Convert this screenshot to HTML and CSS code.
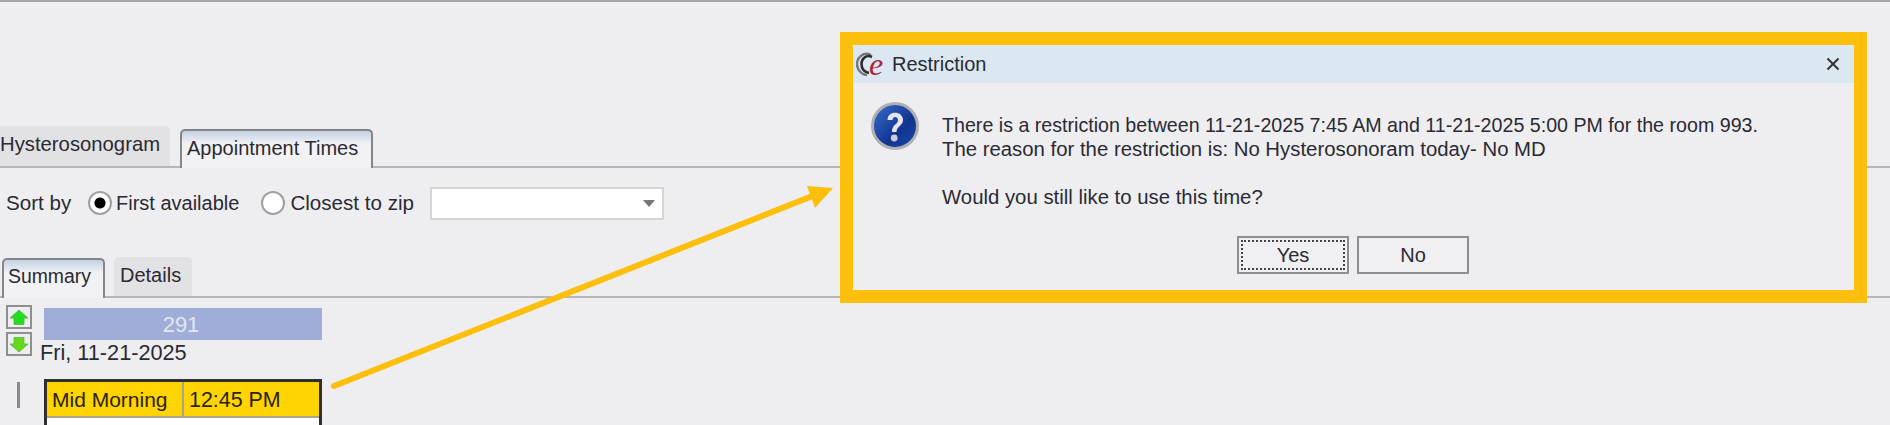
FILE: index.html
```html
<!DOCTYPE html>
<html lang="en">
<head>
    <meta charset="UTF-8">
    <title>Restriction</title>
    <link rel="stylesheet" href="styles.css">
</head>
<body>
    <div class="page">
        <div class="tabstrip main-tabs">
            <div class="tab tab-off tab-first">Hysterosonogram</div>
            <div class="tab tab-on tab-appt">Appointment Times</div>
        </div>

        <div class="sort-row">
            <span class="sort-label">Sort by</span>
            <span class="radio radio-on"></span>
            <span class="radio-text">First available</span>
            <span class="radio radio-second"></span>
            <span class="radio-text radio-text-zip">Closest to zip</span>
            <div class="combo"><span class="combo-arrow"></span></div>
        </div>

        <div class="tabstrip sub-tabs">
            <div class="tab tab-on tab-summary">Summary</div>
            <div class="tab tab-off tab-details">Details</div>
        </div>

        <div class="results">
            <div class="nav-btns">
                <div class="nav-btn">
                    <svg width="20" height="17" viewBox="0 0 20 17"><path d="M10 1 L19 9 H15 V15.5 H5 V9 H1 Z" fill="#22dd22" stroke="#4fb83a" stroke-width="0.8"/></svg>
                </div>
                <div class="nav-btn">
                    <svg width="20" height="17" viewBox="0 0 20 17"><path d="M5 1.5 H15 V8 H19 L10 16 L1 8 H5 Z" fill="#66d81c" stroke="#4fb83a" stroke-width="0.8"/></svg>
                </div>
            </div>
            <div class="day">
                <div class="day-count">291</div>
                <div class="day-date">Fri, 11-21-2025</div>
                <div class="slot-row">
                    <span class="slot-mark"></span>
                    <div class="slot">
                        <div class="slot-head">
                            <span class="slot-name">Mid Morning</span>
                            <span class="slot-time">12:45 PM</span>
                        </div>
                        <div class="slot-body"></div>
                    </div>
                </div>
            </div>
        </div>
    </div>

    <svg class="callout-arrow" width="1890" height="425" viewBox="0 0 1890 425">
        <line x1="334" y1="386" x2="815" y2="195" stroke="#fcbf0b" stroke-width="6" stroke-linecap="round"/>
        <polygon points="833,188 807,186 815,208" fill="#fcbf0b"/>
    </svg>

    <div class="dialog">
        <div class="dialog-title">
            <svg class="dialog-logo" width="30" height="38" viewBox="0 -5 30 38">
                <path d="M15 5 C7 1 1 8 1 14 C1 20 6 25 11 25" fill="none" stroke="#77777b" stroke-width="2.4"/>
                <path d="M16 7 C10 4 5.5 9 5.5 14 C5.5 19 9 22 13 23" fill="none" stroke="#2e2e32" stroke-width="2.6"/>
                <text class="logo-e" x="13" y="25">e</text>
            </svg>
            <span class="dialog-name">Restriction</span>
            <svg class="dialog-close" width="14" height="14" viewBox="0 0 14 14"><path d="M1.5 1.5 L12.5 12.5 M12.5 1.5 L1.5 12.5" stroke="#333" stroke-width="2"/></svg>
        </div>
        <div class="dialog-body">
            <svg class="dialog-icon" width="48" height="48" viewBox="0 0 48 48">
                <defs>
                    <linearGradient id="qfill" x1="0" y1="0" x2="1" y2="1">
                        <stop offset="0" stop-color="#3a70d0"/>
                        <stop offset="0.6" stop-color="#12348f"/>
                        <stop offset="1" stop-color="#1a48b0"/>
                    </linearGradient>
                </defs>
                <circle cx="24" cy="24" r="22.5" fill="url(#qfill)" stroke="#b0b0b4" stroke-width="3"/>
                <path d="M16.5 18 C16.5 8 32 8.5 32 18 C32 24 25.5 24 25.5 30 H21 C21 22 27 22.5 27 18 C27 14 21.5 14 21.5 18 Z" fill="#e4e6ee"/>
                <circle cx="23.2" cy="36" r="3.4" fill="#c9cbd6"/>
            </svg>
            <div class="dialog-text">
                <p class="dialog-first">There is a restriction between 11-21-2025 7:45 AM and 11-21-2025 5:00 PM for the room 993.</p>
                <p>The reason for the restriction is: No Hysterosonoram today- No MD</p>
                <p class="dialog-question">Would you still like to use this time?</p>
            </div>
        </div>
        <div class="dialog-buttons">
            <button class="dlg-btn dlg-btn-focus"><span>Yes</span></button>
            <button class="dlg-btn"><span>No</span></button>
        </div>
    </div>
</body>
</html>
```

FILE: styles.css
```css
html, body { margin: 0; height: 425px; overflow: hidden; }
body { width: 1890px; background: #eeeef1; color: #2a2a33; font-family: "Liberation Sans", Arial, sans-serif; font-size: 20px; }
.page { border-top: 2px solid #a6a6a8; height: 423px; overflow: hidden; }

.tabstrip { display: flex; align-items: flex-end; border-bottom: 2px solid #b7b7ba; }
.main-tabs { height: 164px; }
.sub-tabs { height: 60px; }
.tab { box-sizing: border-box; line-height: 30px; border-radius: 5px 5px 0 0; }
.tab-off { background: #e2e2e5; }
.tab-on { background: linear-gradient(#c3d2e4 0, #f2f2f4 13px); border: 2px solid #85858a; border-bottom: none; margin-bottom: -2px; position: relative; }
.tab-first { width: 170px; height: 40px; padding: 3px 0 0 0; font-size: 20.3px; border-top-left-radius: 0; }
.tab-appt { width: 193px; height: 39px; margin-left: 10px; padding: 2px 0 0 5px; }
.tab-summary { width: 103px; height: 40px; margin-left: 2px; padding: 1px 0 0 4px; font-size: 19.4px; }
.tab-details { width: 78px; height: 39px; margin-left: 9px; padding: 3px 0 0 6px; }

.sort-row { box-sizing: border-box; display: flex; align-items: center; height: 68px; padding: 2px 0 0 6px; }
.sort-label { width: 82px; font-size: 20.6px; }
.radio { box-sizing: border-box; width: 24px; height: 24px; border: 2px solid #a0a0a4; border-radius: 50%; background: #fff; flex: none; }
.radio-on { background: radial-gradient(circle, #000 0 5px, #fff 6px); }
.radio-text { margin-left: 4px; }
.radio-text-zip { margin-left: 5px; font-size: 20.6px; }
.radio-second { margin-left: 22px; }
.combo { box-sizing: border-box; width: 234px; height: 33px; margin-left: 16px; background: #fff; border: 2px solid #d5d5d8; position: relative; }
.combo-arrow { position: absolute; right: 7px; top: 11px; border: 6px solid transparent; border-top: 7px solid #77777a; border-bottom: none; }

.results { display: flex; padding: 9px 0 0 6px; }
.nav-btns { width: 26px; flex: none; margin-top: -2px; }
.nav-btn { box-sizing: border-box; width: 26px; height: 24px; margin-bottom: 3px; border: 2px solid #8f8f92; display: flex; align-items: center; justify-content: center; }
.day { width: 290px; }
.day-count { box-sizing: border-box; width: 278px; height: 32px; margin: 1px 0 0 12px; padding-right: 4px; background: #9fadd8; color: #e2e6f4; text-align: center; line-height: 34px; font-size: 22px; }
.day-date { margin-left: 8px; line-height: 24px; margin-top: 1px; font-size: 21.7px; }
.slot-row { display: flex; margin-top: 14px; position: relative; }
.slot-mark { position: absolute; left: -15px; top: 3px; width: 3px; height: 26px; background: #8a8a8d; }
.slot { box-sizing: border-box; width: 278px; margin-left: 12px; border: 3px solid #2f2f33; border-bottom: none; }
.slot-head { display: flex; height: 34px; line-height: 35px; background: #ffd400; border-bottom: 2px solid #a9a48a; color: #2a2300; font-size: 21px; }
.slot-name { box-sizing: border-box; width: 137px; padding-left: 5px; border-right: 2px solid #a9a48a; }
.slot-time { padding-left: 5px; font-size: 21.4px; line-height: 36px; }
.slot-body { height: 9px; background: #fff; }

.callout-arrow { position: absolute; left: 0; top: 0; }

.dialog { position: absolute; left: 840px; top: 32px; box-sizing: border-box; width: 1027px; height: 271px; border: 13px solid #fcbf0b; background: #eeeef1; font-size: 20.35px; }
.dialog-title { display: flex; align-items: center; height: 38px; background: #dce8f1; }
.dialog-logo { margin-left: 3px; flex: none; }
.logo-e { font-family: "Liberation Serif", serif; font-style: italic; font-size: 32px; fill: #a8283a; }
.dialog-name { margin-left: 6px; font-size: 20px; }
.dialog-close { margin-left: auto; margin-right: 14px; }
.dialog-body { display: flex; padding: 19px 0 0 18px; }
.dialog-icon { flex: none; }
.dialog-text { margin: 11px 0 0 23px; line-height: 24px; }
.dialog-text p { margin: 0; }
.dialog-text .dialog-first { font-size: 19.65px; }
.dialog-text .dialog-question { padding-top: 24px; }
.dialog-buttons { display: flex; justify-content: center; gap: 8px; margin-top: 27px; padding-right: 1px; }
.dlg-btn { box-sizing: border-box; width: 112px; height: 38px; padding: 2px; background: #f0f0f3; border: 2px solid #8e8e90; font: 20px "Liberation Sans", Arial, sans-serif; color: #2a2a33; }
.dlg-btn span { display: block; line-height: 26px; border: 2px solid transparent; }
.dlg-btn-focus span { border: 2px dotted #444; }
```
